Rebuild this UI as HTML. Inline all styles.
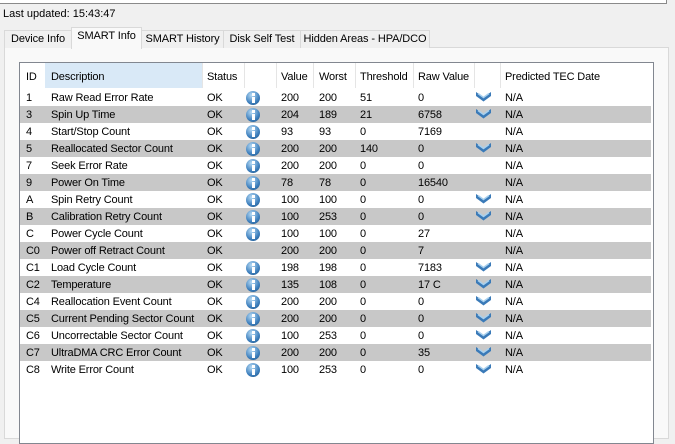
<!DOCTYPE html>
<html><head><style>
body{margin:0;width:675px;height:428px;background:#f0f0f0;font-family:"Liberation Sans",sans-serif;font-size:11px;color:#000;position:relative;overflow:hidden}
.a{position:absolute;white-space:nowrap}
.tab{position:absolute;top:30px;height:17px;border:1px solid #d9d9d9;border-bottom:none;background:#f0f0f0;line-height:17px;text-align:center;font-size:11px;letter-spacing:-0.1px}
.row{position:absolute;left:20px;width:631px;height:17px;line-height:18px;letter-spacing:-0.15px}
.g{background:#c8c8c8}
.row span{position:absolute;top:0}
.ic{position:absolute;left:226px;top:2px;width:14px;height:14px;border-radius:50%;background:radial-gradient(circle at 40% 30%,#b8dcf6,#3d7fbd 60%,#1d4f80);}
.ic:after{content:"";position:absolute;left:5.5px;top:6px;width:3px;height:6px;background:#fff}
.ic:before{content:"";position:absolute;left:5.5px;top:2px;width:3px;height:3px;background:#fff}
.ch{position:absolute;left:455px;top:1px}
</style></head><body>
<div class="a" style="left:-1px;top:-10px;width:666px;height:12px;border:1px solid #8a8a8a;background:#fff"></div>
<div class="a" style="left:3px;top:8px;font-size:11px">Last updated: 15:43:47</div>
<div class="a" style="left:4px;top:47px;width:663px;height:390px;border:1px solid #d9d9d9;background:#f9f9f9"></div>
<div class="tab" style="left:4px;width:66px">Device Info</div>
<div class="tab" style="left:71px;top:27px;height:21px;width:69px;background:#f9f9f9;line-height:17px">SMART Info</div>
<div class="tab" style="left:141px;width:81px">SMART History</div>
<div class="tab" style="left:223px;width:76px">Disk Self Test</div>
<div class="tab" style="left:300px;width:128px">Hidden Areas - HPA/DCO</div>
<div class="a" style="left:19px;top:62px;width:633px;height:380px;border:1px solid #828790;background:#fff"></div>
<div class="a" style="left:45px;top:63px;width:157px;height:25px;background:#d9e9f7"></div>
<div class="a" style="left:202px;top:63px;height:25px;border-left:1px solid #e5e5e5"></div>
<div class="a" style="left:244px;top:63px;height:25px;border-left:1px solid #e5e5e5"></div>
<div class="a" style="left:276px;top:63px;height:25px;border-left:1px solid #e5e5e5"></div>
<div class="a" style="left:313px;top:63px;height:25px;border-left:1px solid #e5e5e5"></div>
<div class="a" style="left:355px;top:63px;height:25px;border-left:1px solid #e5e5e5"></div>
<div class="a" style="left:413px;top:63px;height:25px;border-left:1px solid #e5e5e5"></div>
<div class="a" style="left:474px;top:63px;height:25px;border-left:1px solid #e5e5e5"></div>
<div class="a" style="left:500px;top:63px;height:25px;border-left:1px solid #e5e5e5"></div>
<div class="row" style="top:68px"><span style="left:6px">ID</span><span style="left:31px">Description</span><span style="left:187px">Status</span><span style="left:261px">Value</span><span style="left:299px">Worst</span><span style="left:340px">Threshold</span><span style="left:398px">Raw Value</span><span style="left:485px">Predicted TEC Date</span></div>
<div id="rows"></div>
<script>
var d=[["1","Raw Read Error Rate","200","200","51","0",1,1],["3","Spin Up Time","204","189","21","6758",1,1],["4","Start/Stop Count","93","93","0","7169",1,0],["5","Reallocated Sector Count","200","200","140","0",1,1],["7","Seek Error Rate","200","200","0","0",1,0],["9","Power On Time","78","78","0","16540",1,0],["A","Spin Retry Count","100","100","0","0",1,1],["B","Calibration Retry Count","100","253","0","0",1,1],["C","Power Cycle Count","100","100","0","27",1,0],["C0","Power off Retract Count","200","200","0","7",0,0],["C1","Load Cycle Count","198","198","0","7183",1,1],["C2","Temperature","135","108","0","17 C",1,1],["C4","Reallocation Event Count","200","200","0","0",1,1],["C5","Current Pending Sector Count","200","200","0","0",1,1],["C6","Uncorrectable Sector Count","100","253","0","0",1,1],["C7","UltraDMA CRC Error Count","200","200","0","35",1,1],["C8","Write Error Count","100","253","0","0",1,1]];
var h="";
var chev='<svg class="ch" width="17" height="13" viewBox="0 0 17 13"><path d="M1 2 L8.5 7 L16 2 L16 6 L8.5 11.5 L1 6Z" fill="#3a7ab8"/><path d="M3 3.5 L8.5 7.5 L14 3.5" stroke="#a8d0ee" stroke-width="1.5" fill="none"/></svg>';
d.forEach(function(r,i){h+='<div class="row'+(i%2?' g':'')+'" style="top:'+(89+17*i)+'px"><span style="left:6px">'+r[0]+'</span><span style="left:31px">'+r[1]+'</span><span style="left:187px">OK</span>'+(r[6]?'<div class="ic"></div>':'')+'<span style="left:261px">'+r[2]+'</span><span style="left:299px">'+r[3]+'</span><span style="left:340px">'+r[4]+'</span><span style="left:398px">'+r[5]+'</span>'+(r[7]?chev:'')+'<span style="left:485px">N/A</span></div>'});
document.getElementById("rows").innerHTML=h;
</script>
</body></html>
